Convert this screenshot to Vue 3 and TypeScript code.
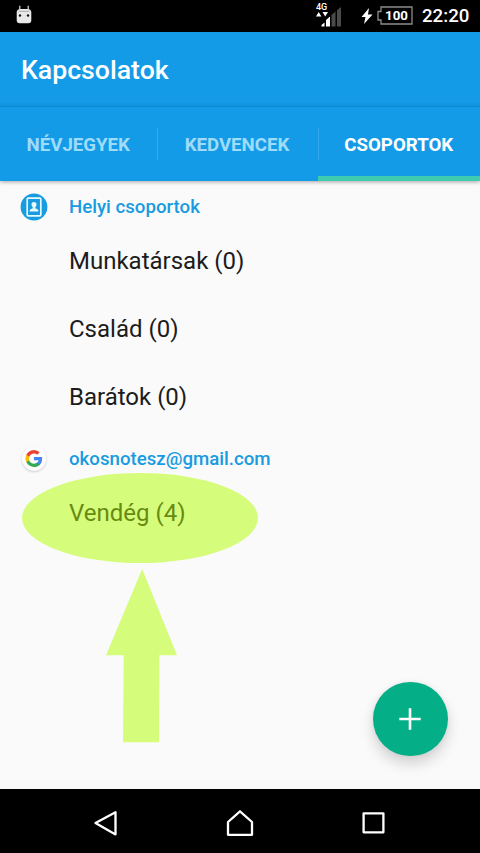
<script setup lang="ts">
interface Group {
  name: string
  count: number
  marked?: boolean
}

interface Account {
  label: string
  kind: 'local' | 'google'
  groups: Group[]
}

const tabs = [
  { label: 'NÉVJEGYEK', active: false },
  { label: 'KEDVENCEK', active: false },
  { label: 'CSOPORTOK', active: true },
]

const accounts: Account[] = [
  {
    label: 'Helyi csoportok',
    kind: 'local',
    groups: [
      { name: 'Munkatársak', count: 0 },
      { name: 'Család', count: 0 },
      { name: 'Barátok', count: 0 },
    ],
  },
  {
    label: 'okosnotesz@gmail.com',
    kind: 'google',
    groups: [{ name: 'Vendég', count: 4, marked: true }],
  },
]
</script>

<template>
  <div class="phone">
    <div class="status">
      <svg class="droid" width="16" height="20" viewBox="0 0 16 20">
        <path d="M3.800 .8v4M12.200 .8v4" stroke="#ddd" stroke-width="1.200" />
        <path d="M.7 7.500q0-3.500 3.800-3.500h7q3.800 0 3.800 3.500v7.700q0 3-3 3H3.700q-3 0-3-3z" fill="#e8e8e8" />
        <path d="M2.500 6.300h11" stroke="#aaa" stroke-width="1" />
        <circle cx="4" cy="10.500" r="1.200" fill="#111" />
        <circle cx="12" cy="10.500" r="1.200" fill="#111" />
      </svg>
      <div class="signal">
        <span class="net">4G</span>
        <svg class="bars" width="27" height="20" viewBox="0 0 27 20">
          <path d="M0 9.500 2.700 5 5.400 9.500zM6.500 5h5.500L9.200 9.500z" fill="#fff" />
          <path d="M5.500 19.500v-1.500l3-2.500v4zM10 19.500v-6.500l4-3.500v10z" fill="#fff" />
          <path d="M15.500 19.500V8l4-3.500v15zM21 19.500V3.300L25 0v19.500z" fill="#4a4a4a" />
        </svg>
      </div>
      <svg class="bolt" width="12" height="16" viewBox="0 0 12 16">
        <path d="M8 0 .5 9h4L3 16l8.500-9.500H7z" fill="#fff" />
      </svg>
      <div class="battery">
        <svg width="36" height="19" viewBox="0 0 36 19">
          <path d="M4 1h31v17H4v-4H1V5.500h3z" fill="none" stroke="#8c8c8c" stroke-width="1.300" />
        </svg>
        <span>100</span>
      </div>
      <span class="clock">22:20</span>
    </div>

    <header class="toolbar"><h1>Kapcsolatok</h1></header>

    <nav class="tabs">
      <div v-for="tab in tabs" :key="tab.label" class="tab" :class="{ active: tab.active }">
        <span>{{ tab.label }}</span>
      </div>
    </nav>

    <main class="content">
      <section v-for="account in accounts" :key="account.label" class="account">
        <div class="account-head">
          <svg v-if="account.kind === 'local'" class="avatar" viewBox="0 0 28 28">
            <circle cx="14" cy="14" r="13.400" fill="#189be0" />
            <rect x="7.200" y="5.200" width="13.600" height="17.600" rx="1" fill="none" stroke="#e4faff" stroke-width="1.700" />
            <path d="M9.700 18.500v-1.300q0-1.200 3-2v-1q-1.200-1-1.200-2.700 0-2.500 2.500-2.500t2.500 2.500q0 1.700-1.200 2.700v1q3 .8 3 2v1.300z" fill="#e4faff" />
          </svg>
          <svg v-else class="avatar google" viewBox="0 0 28 28">
            <circle cx="14" cy="13.700" r="12.200" fill="#fcfcfc" />
            <g transform="translate(5.500 5) scale(.7083)">
              <path fill="#4285f4" d="M23.500 12.300c0-.8-.1-1.600-.2-2.300H12v4.500h6.500c-.3 1.500-1.100 2.700-2.400 3.600v3h3.900c2.200-2.100 3.500-5.200 3.500-8.800z" />
              <path fill="#34a853" d="M12 24c3.200 0 6-1.100 8-2.900l-3.900-3c-1.100.7-2.500 1.200-4.100 1.200-3.100 0-5.800-2.100-6.700-5H1.300v3.100C3.300 21.300 7.300 24 12 24z" />
              <path fill="#fbbc05" d="M5.300 14.300a7.200 7.200 0 0 1 0-4.600V6.600h-4a12 12 0 0 0 0 10.800z" />
              <path fill="#ea4335" d="M12 4.800c1.800 0 3.300.6 4.600 1.800L20 3.200A12 12 0 0 0 1.300 6.600l4 3.100c.9-2.900 3.600-4.900 6.700-4.900z" />
            </g>
          </svg>
          <span>{{ account.label }}</span>
        </div>
        <div v-for="group in account.groups" :key="group.name" class="group" :class="{ marked: group.marked }">
          <template v-if="group.marked">
            <div class="ellipse"></div>
            <svg class="arrow" width="72" height="174" viewBox="0 0 72 174">
              <path d="M36.200 0 71 86.200H53.300L53 173.300H17L17.700 86.200H0z" fill="#d5fd7b" />
            </svg>
          </template>
          <span>{{ group.name }} ({{ group.count }})</span>
        </div>
      </section>
      <button class="fab" type="button">
        <svg width="22" height="22" viewBox="0 0 22 22">
          <path d="M11 .3v21.400M.3 11h21.400" stroke="#fff" stroke-width="2.600" />
        </svg>
      </button>
    </main>

    <footer class="navbar">
      <svg width="26" height="28" viewBox="0 0 26 28">
        <path d="M22.500 3.200v22.200L2.500 14z" />
      </svg>
      <svg width="28" height="28" viewBox="0 0 28 28">
        <path d="M14 2.300 26 13v12.800H2V13z" />
      </svg>
      <svg width="26" height="28" viewBox="0 0 26 28">
        <path d="M2.600 4.300h19.800v19H2.600z" />
      </svg>
    </footer>
  </div>
</template>

<style>
body {
  margin: 0;
}
</style>

<style scoped>
.phone {
  width: 480px;
  height: 853px;
  display: flex;
  flex-direction: column;
  overflow: hidden;
  background: #fafafa;
  font-family: Roboto, "Liberation Sans", sans-serif;
}
.status {
  height: 31.500px;
  flex: none;
  box-sizing: border-box;
  display: flex;
  align-items: flex-start;
  background: #000;
  color: #fff;
}
.droid {
  margin: 5px 0 0 16px;
}
.signal {
  margin: 3px 0 0 284px;
  width: 27px;
  height: 24px;
  position: relative;
}
.net {
  position: absolute;
  left: 0;
  top: 0;
  font-size: 9px;
  line-height: 9px;
  font-weight: 500;
}
.bars {
  position: absolute;
  left: 0;
  top: 4px;
}
.bolt {
  margin: 8px 0 0 18px;
}
.battery {
  position: relative;
  width: 36px;
  height: 19px;
  margin: 6px 0 0 4px;
}
.battery svg {
  display: block;
}
.battery span {
  position: absolute;
  left: 3px;
  right: 0;
  top: 0;
  text-align: center;
  font-size: 13.300px;
  line-height: 19px;
  font-weight: 700;
}
.clock {
  margin-left: 9px;
  font-size: 18.670px;
  line-height: 33px;
  font-weight: 500;
}
.toolbar {
  height: 75px;
  flex: none;
  display: flex;
  align-items: center;
  padding: 2px 21px 0;
  box-sizing: border-box;
  background: linear-gradient(#149be8 70px, #0f8fd8);
}
h1 {
  margin: 0;
  color: #fff;
  font-size: 26.670px;
  font-weight: 500;
  line-height: 32px;
}
.tabs {
  height: 74.500px;
  flex: none;
  display: grid;
  grid-template-columns: 156.500px 161px 162.500px;
  background: #149be8;
  box-shadow: 0 1px 4px rgba(0, 0, 0, 0.35);
  clip-path: inset(0 0 -8px 0);
}
.tab {
  display: flex;
  align-items: center;
  justify-content: center;
  position: relative;
  box-sizing: border-box;
  padding-top: 2px;
  font-size: 18.670px;
  font-weight: 700;
  color: #9fdcfa;
}
.tab:not(:last-child)::after {
  content: "";
  position: absolute;
  right: -1px;
  top: 21px;
  width: 1px;
  height: 32px;
  background: #33a9ef;
}
.tab.active {
  color: #fff;
  border-bottom: 5px solid #3fcbb0;
  padding-top: 7px;
}
.content {
  flex: 1;
  position: relative;
}
.account-head {
  height: 48px;
  box-sizing: border-box;
  padding: 8px 0 0 20px;
  display: flex;
  align-items: center;
  color: #189be0;
  font-size: 18.670px;
  font-weight: 500;
}
.account:first-child .account-head {
  height: 46px;
  padding-top: 6px;
}
.avatar {
  width: 28px;
  height: 28px;
  margin: 0 21px 1px 0;
}
.google {
  filter: drop-shadow(0 1px 1px rgba(0, 0, 0, 0.18));
}
.group {
  height: 68px;
  padding-left: 69px;
  display: flex;
  align-items: center;
  position: relative;
  font-size: 24px;
  color: #1c1c1c;
}
.group span {
  position: relative;
}
.marked {
  color: #688a12;
}
.ellipse {
  position: absolute;
  left: 21.500px;
  top: -6px;
  width: 236.500px;
  height: 90px;
  border-radius: 50%;
  background: #d5fd7b;
}
.arrow {
  position: absolute;
  left: 106px;
  top: 90px;
}
.fab {
  position: absolute;
  right: 32.500px;
  bottom: 32.500px;
  width: 74.500px;
  height: 74.500px;
  padding: 0;
  border: 0;
  border-radius: 50%;
  display: flex;
  align-items: center;
  justify-content: center;
  background: #04af87;
  box-shadow: 0 8px 14px rgba(0, 0, 0, 0.16), 0 0 5px rgba(0, 0, 0, 0.06);
}
.navbar {
  height: 64.500px;
  flex: none;
  box-sizing: border-box;
  padding: 4px 93px 0;
  display: flex;
  align-items: center;
  justify-content: space-between;
  background: #000;
}
.navbar path {
  fill: none;
  stroke: #fff;
  stroke-width: 2.300;
  stroke-linejoin: round;
}
</style>
